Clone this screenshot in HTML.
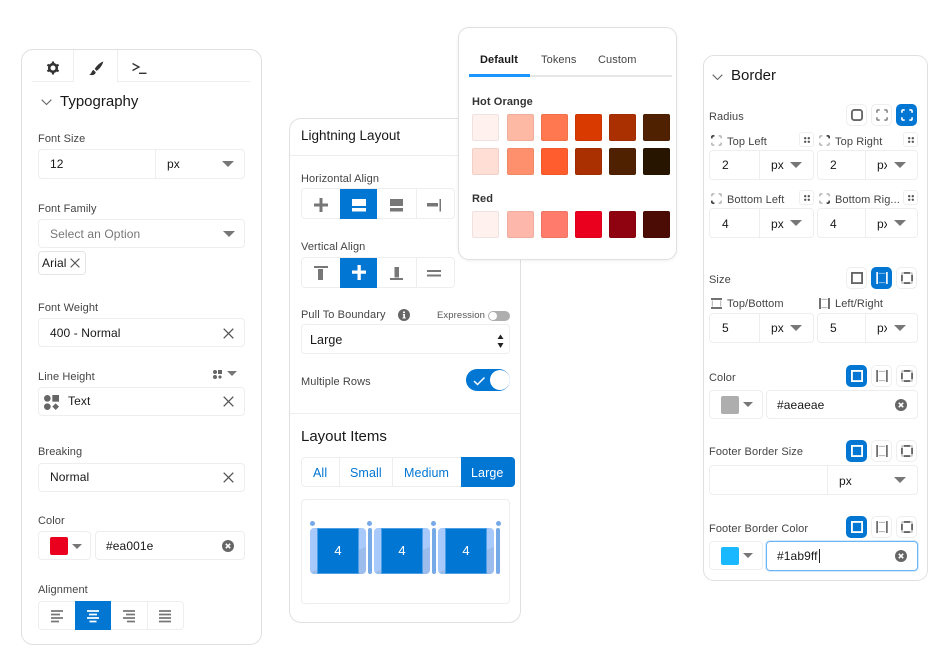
<!DOCTYPE html>
<html lang="en"><head><meta charset="utf-8"><title>Property panels</title>
<style>
html,body{margin:0;padding:0;background:#fff}
body{position:relative;width:945px;height:650px;overflow:hidden;font-family:"Liberation Sans",sans-serif;color:#181818}
.a{position:absolute;box-sizing:border-box}
.p{position:absolute;box-sizing:border-box;background:#fff;border:1px solid #e0e0e0}
.t{position:absolute;white-space:nowrap;line-height:16px;height:16px;margin-top:1px;font-size:11px;color:#444;letter-spacing:.1px}
.v{position:absolute;white-space:nowrap;line-height:16px;height:16px;font-size:12px;color:#181818;letter-spacing:.1px}
.h{position:absolute;white-space:nowrap;line-height:20px;height:20px;margin-top:1px;font-size:15px;color:#181818}
.f{position:absolute;box-sizing:border-box;background:#fff;border:1px solid #eee;border-radius:4px}
.l{position:absolute;background:#eee}
.tri{position:absolute;width:0;height:0;border-left:6px solid transparent;border-right:6px solid transparent;border-top:6px solid #777}
.tri.s{border-left-width:5px;border-right-width:5px;border-top-width:5.500px}
.active{position:absolute;background:#0176d3}
.sw{position:absolute;width:27px;height:27px;border-radius:2px;box-shadow:inset 0 0 0 1px rgba(0,0,0,.06)}
.b{position:absolute;box-sizing:border-box;width:21px;height:22px;border:1px solid #eee;border-radius:5px;background:#fff;color:#666}
.b.on{background:#0176d3;border-color:#0176d3;color:#fff}
.b svg{position:absolute;left:3.500px;top:4px;width:12px;height:12px}
.d{position:absolute;box-sizing:border-box;width:15px;height:15px;border:1px solid #eee;border-radius:3px;background:#fff}
svg{position:absolute;overflow:visible}
.dot{position:absolute;width:5px;height:5px;border-radius:50%;background:#76a9e8}
.it{position:absolute;top:528px;width:56px;height:46px;border-radius:4px;background:linear-gradient(155deg,#a8c9fb 62%,#9cbcec 62%)}
.it div{position:absolute;left:7px;top:0;width:42px;height:46px;background:#0176d3;border:1px solid #4f9fe6;box-sizing:border-box;color:#fff;font-size:13px;line-height:44px;text-align:center}
.bar{position:absolute;top:528px;width:4px;height:46px;border-radius:2px;background:#76a9e8}
</style></head><body>
<svg width="0" height="0" style="position:absolute">
<symbol id="x" viewBox="0 0 11 11"><path d="M.7.7l9.6 9.6M10.300.7L.7 10.300" stroke="#555" stroke-width="1.300" fill="none"/></symbol>
<symbol id="clr" viewBox="0 0 12 12"><circle cx="6" cy="6" r="6" fill="#666"/><path d="M3.800 3.800l4.400 4.400M8.200 3.800L3.800 8.200" stroke="#fff" stroke-width="1.600"/></symbol>
<symbol id="grid" viewBox="0 0 9 9"><circle cx="2" cy="2" r="2" fill="#666"/><rect x="5" y="0" width="4" height="4" fill="#666"/><circle cx="2" cy="7" r="2" fill="#666"/><path d="M7 5l2 2-2 2-2-2z" fill="#666"/></symbol>
<symbol id="drag" viewBox="0 0 7 7"><g fill="#555"><circle cx="1.400" cy="1.400" r="1.400"/><circle cx="5.600" cy="1.400" r="1.400"/><circle cx="1.400" cy="5.600" r="1.400"/><circle cx="5.600" cy="5.600" r="1.400"/></g></symbol>
<symbol id="rnd" viewBox="0 0 13 13"><rect x="1" y="1" width="11" height="11" rx="2.500" fill="none" stroke="currentColor" stroke-width="2"/></symbol>
<symbol id="cor" viewBox="0 0 13 13"><path d="M1 4V2.500Q1 1 2.500 1H4M9 1h1.500Q12 1 12 2.500V4M12 9v1.500Q12 12 10.500 12H9M4 12H2.500Q1 12 1 10.500V9" fill="none" stroke="currentColor" stroke-width="1.800"/></symbol>
<symbol id="sq" viewBox="0 0 13 13"><rect x="1" y="1" width="11" height="11" fill="none" stroke="currentColor" stroke-width="2"/></symbol>
<symbol id="lr" viewBox="0 0 13 13"><path d="M3 1.500h7M3 11.500h7" stroke="currentColor" stroke-opacity=".5" stroke-width="1"/><path d="M1.200 0v13M11.800 0v13" stroke="currentColor" stroke-width="1.800"/></symbol>
<symbol id="tb" viewBox="0 0 13 13"><path d="M1.500 3v7M11.500 3v7" stroke="currentColor" stroke-opacity=".5" stroke-width="1"/><path d="M0 1.200h13M0 11.800h13" stroke="currentColor" stroke-width="1.800"/></symbol>
<symbol id="mid" viewBox="0 0 13 13"><rect x="1" y="1" width="11" height="11" rx=".5" fill="none" stroke="currentColor" stroke-opacity=".45" stroke-width="1.500"/><path d="M3.200 1h6.600M3.200 12h6.600M1 3.200v6.600M12 3.200v6.600" stroke="currentColor" stroke-width="2"/></symbol>
</svg>

<!-- PANEL 1 -->
<div class="p" style="left:21px;top:49px;width:241px;height:596px;border-radius:12px"></div>
<div class="l" style="left:32px;top:81px;width:218px;height:1px"></div>
<div class="l" style="left:73px;top:50px;width:1px;height:32px"></div>
<div class="l" style="left:117px;top:50px;width:1px;height:32px"></div>
<div class="a" style="left:74px;top:50px;width:43px;height:33px;background:#fff"></div>
<svg style="left:46px;top:61px" width="14" height="14" viewBox="0 0 14 14"><g stroke="#333" stroke-width="2.200"><path d="M7 .5v13M1.400 3.700l11.200 6.600M12.600 3.700L1.400 10.300"/></g><circle cx="7" cy="7" r="3.800" fill="#fff" stroke="#333" stroke-width="2.600"/></svg>
<svg style="left:89px;top:61px" width="15" height="15" viewBox="0 0 15 15"><path d="M14.300.5C11 1.500 7.500 4.700 5.700 8l1.900 1.900C10.500 8 13.500 4.300 14.300.5zM4.500 9C2.500 9.300 3 12.500.3 13.700c2.700 1 6.200.2 6.400-2.600z" fill="#333"/></svg>
<svg style="left:132px;top:62px" width="15" height="13" viewBox="0 0 15 13"><path d="M.5 1.500L7 5 .5 8.500" fill="none" stroke="#333" stroke-width="1.300"/><path d="M7 11.300h7.500" stroke="#333" stroke-width="1.400"/></svg>
<svg style="left:41px;top:99px" width="11" height="7" viewBox="0 0 11 7"><path d="M.7.700l4.800 4.800L10.300.700" fill="none" stroke="#666" stroke-width="1.100"/></svg>
<div class="h" style="left:60px;top:91px">Typography</div>

<div class="t" style="left:38px;top:130px">Font Size</div>
<div class="f" style="left:38px;top:149px;width:207px;height:30px"></div>
<div class="l" style="left:155px;top:150px;width:1px;height:28px"></div>
<div class="v" style="left:50px;top:156px">12</div><div class="v" style="left:167px;top:156px">px</div>
<div class="tri" style="left:222px;top:161px"></div>

<div class="t" style="left:38px;top:200px">Font Family</div>
<div class="f" style="left:38px;top:219px;width:207px;height:29px"></div>
<div class="v" style="left:50px;top:226px;color:#777">Select an Option</div>
<div class="tri" style="left:223px;top:231px"></div>
<div class="f" style="left:38px;top:251px;width:48px;height:24px;border-color:#e4e4e4"></div>
<div class="v" style="left:42px;top:255px">Arial</div>
<svg style="left:70px;top:258px" width="10" height="10"><use href="#x"/></svg>

<div class="t" style="left:38px;top:299px">Font Weight</div>
<div class="f" style="left:38px;top:318px;width:207px;height:29px"></div>
<div class="v" style="left:50px;top:325px">400 - Normal</div>
<svg style="left:223px;top:328px" width="11" height="11"><use href="#x"/></svg>

<div class="t" style="left:38px;top:368px">Line Height</div>
<svg style="left:213px;top:370px" width="9" height="9"><use href="#grid"/></svg>
<div class="tri s" style="left:227px;top:371px"></div>
<div class="f" style="left:38px;top:387px;width:207px;height:29px"></div>
<svg style="left:44px;top:395px" width="15" height="15"><use href="#grid"/></svg>
<div class="v" style="left:68px;top:393px">Text</div>
<svg style="left:223px;top:396px" width="11" height="11"><use href="#x"/></svg>

<div class="t" style="left:38px;top:443px">Breaking</div>
<div class="f" style="left:38px;top:463px;width:207px;height:29px"></div>
<div class="v" style="left:50px;top:469px">Normal</div>
<svg style="left:223px;top:472px" width="11" height="11"><use href="#x"/></svg>

<div class="t" style="left:38px;top:512px">Color</div>
<div class="f" style="left:38px;top:531px;width:53px;height:29px"></div>
<div class="a" style="left:50px;top:537px;width:18px;height:18px;background:#ea001e;border-radius:2px"></div>
<div class="tri s" style="left:72px;top:544px"></div>
<div class="f" style="left:95px;top:531px;width:150px;height:29px"></div>
<div class="v" style="left:106px;top:538px">#ea001e</div>
<svg style="left:222px;top:540px" width="12" height="12"><use href="#clr"/></svg>

<div class="t" style="left:38px;top:581px">Alignment</div>
<div class="f" style="left:38px;top:601px;width:146px;height:29px"></div>
<div class="l" style="left:147px;top:602px;width:1px;height:27px"></div>
<div class="active" style="left:75px;top:601px;width:36px;height:29px"></div>
<svg style="left:51px;top:610px" width="13" height="13"><path d="M0 1h12M0 4.500h9M0 8h12M0 11.500h8" stroke="#777" stroke-width="1.700"/></svg>
<svg style="left:87px;top:610px" width="13" height="13"><path d="M0 1h12M2 4.500h8M0 8h12M2.500 11.500h7" stroke="#fff" stroke-width="1.700"/></svg>
<svg style="left:123px;top:610px" width="13" height="13"><path d="M0 1h12M3 4.500h9M0 8h12M4 11.500h8" stroke="#777" stroke-width="1.700"/></svg>
<svg style="left:159px;top:610px" width="13" height="13"><path d="M0 1h12M0 4.500h12M0 8h12M0 11.500h12" stroke="#777" stroke-width="1.700"/></svg>

<!-- PANEL 2 -->
<div class="p" style="left:289px;top:118px;width:232px;height:505px;border-radius:12px"></div>
<div class="v" style="left:301px;top:128px;font-size:13.500px;letter-spacing:0">Lightning Layout</div>
<div class="l" style="left:290px;top:155px;width:230px;height:1px"></div>

<div class="t" style="left:301px;top:170px">Horizontal Align</div>
<div class="f" style="left:301px;top:188px;width:154px;height:31px"></div>
<div class="l" style="left:416px;top:189px;width:1px;height:29px"></div>
<div class="active" style="left:340px;top:189px;width:37px;height:30px"></div>
<svg style="left:314px;top:198px" width="14" height="14"><path d="M0 5.500h14v3H0zM5.500 0h3v14h-3z" fill="#777"/></svg>
<svg style="left:352px;top:199px" width="14" height="13"><path d="M0 0h14v7H0zM0 9h14v3.500H0z" fill="#fff"/></svg>
<svg style="left:390px;top:199px" width="14" height="13"><path d="M0 0h13v7H0zM0 9h13v3.500H0z" fill="#777"/></svg>
<svg style="left:427px;top:199px" width="15" height="13"><path d="M0 4h11v3.500H0zM12.500 0H14v12.500h-1.500z" fill="#777"/></svg>

<div class="t" style="left:301px;top:238px">Vertical Align</div>
<div class="f" style="left:301px;top:257px;width:154px;height:31px"></div>
<div class="l" style="left:416px;top:258px;width:1px;height:29px"></div>
<div class="active" style="left:340px;top:258px;width:37px;height:30px"></div>
<svg style="left:314px;top:266px" width="14" height="15"><path d="M0 0h14v2H0zM4 3h5v11H4z" fill="#777"/></svg>
<svg style="left:352px;top:265px" width="14" height="15"><path d="M0 5.500h14v3.300H0zM5.500 0h3.300v15H5.500z" fill="#fff"/></svg>
<svg style="left:390px;top:267px" width="14" height="14"><path d="M4.500 0h4.500v10.500H4.500zM0 11h13v2H0z" fill="#777"/></svg>
<svg style="left:427px;top:270px" width="14" height="7"><path d="M0 0h14v2H0zM0 4.500h14v2H0z" fill="#777"/></svg>

<div class="t" style="left:301px;top:306px">Pull To Boundary</div>
<svg style="left:398px;top:309px" width="12" height="12" viewBox="0 0 12 12"><circle cx="6" cy="6" r="6" fill="#666"/><path d="M5 2.500h2v1.600H5zM4.800 5h2.200v3.500h.8v1H4.500v-1h.8V6h-.5z" fill="#fff"/></svg>
<div class="t" style="left:437px;top:307px;font-size:9.500px;color:#555">Expression</div>
<div class="a" style="left:488px;top:311px;width:22px;height:10px;border-radius:5px;background:#aeaeae"></div>
<div class="a" style="left:489px;top:312px;width:8px;height:8px;border-radius:50%;background:#fff"></div>
<div class="f" style="left:301px;top:324px;width:209px;height:30px"></div>
<div class="v" style="left:310px;top:332px;font-size:12.500px">Large</div>
<svg style="left:496px;top:333px" width="8" height="16" viewBox="0 0 8 16"><path d="M1.500 6L4.500 1.500 7.500 6zM1.500 10L4.500 15 7.500 10z" fill="#222"/></svg>

<div class="t" style="left:301px;top:373px">Multiple Rows</div>
<div class="a" style="left:466px;top:369px;width:44px;height:22px;border-radius:11px;background:#0176d3"></div>
<div class="a" style="left:490px;top:370px;width:20px;height:20px;border-radius:50%;background:#fff"></div>
<svg style="left:473px;top:376px" width="13" height="10"><path d="M1 5l3.500 3.500L11.500 1.500" fill="none" stroke="#fff" stroke-width="1.500"/></svg>
<div class="l" style="left:290px;top:413px;width:230px;height:1px"></div>
<div class="h" style="left:301px;top:426px">Layout Items</div>
<div class="f" style="left:301px;top:457px;width:214px;height:30px"></div>
<div class="l" style="left:339px;top:458px;width:1px;height:28px"></div>
<div class="l" style="left:392px;top:458px;width:1px;height:28px"></div>
<div class="active" style="left:461px;top:457px;width:54px;height:30px;border-radius:0 4px 4px 0"></div>
<div class="v" style="left:313px;top:465px;color:#0176d3;font-size:12.500px">All</div>
<div class="v" style="left:350px;top:465px;color:#0176d3;font-size:12.500px">Small</div>
<div class="v" style="left:404px;top:465px;color:#0176d3;font-size:12.500px">Medium</div>
<div class="v" style="left:471px;top:465px;color:#fff;font-size:12.500px">Large</div>
<div class="f" style="left:301px;top:499px;width:209px;height:105px"></div>
<div class="dot" style="left:310px;top:521px"></div><div class="dot" style="left:367px;top:521px"></div><div class="dot" style="left:431px;top:521px"></div><div class="dot" style="left:496px;top:521px"></div>
<div class="it" style="left:310px"><div>4</div></div><div class="bar" style="left:368px"></div>
<div class="it" style="left:374px"><div>4</div></div><div class="bar" style="left:432px"></div>
<div class="it" style="left:438px"><div>4</div></div><div class="bar" style="left:496px"></div>

<!-- PANEL 3 -->
<div class="p" style="left:458px;top:27px;width:219px;height:233px;border-radius:11px;box-shadow:0 1px 3px rgba(0,0,0,.06)"></div>
<div class="v" style="left:480px;top:52px;font-size:11px;font-weight:bold">Default</div>
<div class="t" style="left:541px;top:51px">Tokens</div>
<div class="t" style="left:598px;top:51px">Custom</div>
<div class="a" style="left:469px;top:75px;width:203px;height:2px;background:#e6e6e6"></div>
<div class="a" style="left:469px;top:74px;width:61px;height:3px;background:#1b96ff"></div>
<div class="t" style="left:472px;top:93px;font-weight:bold;color:#333">Hot Orange</div>
<div class="sw" style="left:472px;top:114px;background:#fef1ee"></div><div class="sw" style="left:507px;top:114px;background:#feb9a5"></div><div class="sw" style="left:541px;top:114px;background:#ff784f"></div><div class="sw" style="left:575px;top:114px;background:#d83a00"></div><div class="sw" style="left:609px;top:114px;background:#aa3001"></div><div class="sw" style="left:643px;top:114px;background:#4f2100"></div>
<div class="sw" style="left:472px;top:148px;background:#ffded5"></div><div class="sw" style="left:507px;top:148px;background:#ff906e"></div><div class="sw" style="left:541px;top:148px;background:#ff5d2d"></div><div class="sw" style="left:575px;top:148px;background:#aa3001"></div><div class="sw" style="left:609px;top:148px;background:#4f2100"></div><div class="sw" style="left:643px;top:148px;background:#281500"></div>
<div class="t" style="left:472px;top:190px;font-weight:bold;color:#333">Red</div>
<div class="sw" style="left:472px;top:211px;background:#fef1ee"></div><div class="sw" style="left:507px;top:211px;background:#feb8ab"></div><div class="sw" style="left:541px;top:211px;background:#ff7b6b"></div><div class="sw" style="left:575px;top:211px;background:#ea001e"></div><div class="sw" style="left:609px;top:211px;background:#8e030f"></div><div class="sw" style="left:643px;top:211px;background:#4a0c04"></div>

<!-- PANEL 4 -->
<div class="p" style="left:703px;top:55px;width:225px;height:526px;border-radius:11px"></div>
<svg style="left:712px;top:74px" width="11" height="7" viewBox="0 0 11 7"><path d="M.7.700l4.800 4.800L10.300.700" fill="none" stroke="#666" stroke-width="1.100"/></svg>
<div class="h" style="left:731px;top:65px">Border</div>

<div class="t" style="left:709px;top:108px">Radius</div>
<div class="b" style="left:846px;top:104px"><svg><use href="#rnd"/></svg></div>
<div class="b" style="left:871px;top:104px"><svg style="color:#888"><use href="#cor"/></svg></div>
<div class="b on" style="left:896px;top:104px"><svg><use href="#cor"/></svg></div>

<svg style="left:711px;top:135px;color:#b5b5b5" width="11" height="11" viewBox="0 0 13 13"><use href="#cor"/><path d="M1 4V2.500Q1 1 2.500 1H4" fill="none" stroke="#333" stroke-width="1.800"/></svg><div class="t" style="left:727px;top:133px">Top Left</div>
<div class="d" style="left:799px;top:132px"></div><svg style="left:804px;top:137px" width="6" height="6"><use href="#drag"/></svg>
<svg style="left:819px;top:135px;color:#b5b5b5" width="11" height="11" viewBox="0 0 13 13"><use href="#cor"/><path d="M9 1h1.500Q12 1 12 2.500V4" fill="none" stroke="#333" stroke-width="1.800"/></svg><div class="t" style="left:835px;top:133px">Top Right</div>
<div class="d" style="left:903px;top:132px"></div><svg style="left:908px;top:137px" width="6" height="6"><use href="#drag"/></svg>
<div class="f" style="left:709px;top:150px;width:105px;height:30px"></div><div class="l" style="left:759px;top:151px;width:1px;height:28px"></div>
<div class="v" style="left:722px;top:157px">2</div><div class="v" style="left:771px;top:157px">px</div><div class="tri" style="left:790px;top:162px"></div>
<div class="f" style="left:817px;top:150px;width:101px;height:30px"></div><div class="l" style="left:865px;top:151px;width:1px;height:28px"></div>
<div class="v" style="left:830px;top:157px">2</div><div class="v" style="left:877px;top:157px;width:10px;overflow:hidden">px</div><div class="tri" style="left:894px;top:162px"></div>

<svg style="left:711px;top:193px;color:#b5b5b5" width="11" height="11" viewBox="0 0 13 13"><use href="#cor"/><path d="M4 12H2.500Q1 12 1 10.500V9" fill="none" stroke="#333" stroke-width="1.800"/></svg><div class="t" style="left:727px;top:191px">Bottom Left</div>
<div class="d" style="left:799px;top:190px"></div><svg style="left:804px;top:195px" width="6" height="6"><use href="#drag"/></svg>
<svg style="left:819px;top:193px;color:#b5b5b5" width="11" height="11" viewBox="0 0 13 13"><use href="#cor"/><path d="M12 9v1.500Q12 12 10.500 12H9" fill="none" stroke="#333" stroke-width="1.800"/></svg><div class="t" style="left:835px;top:191px">Bottom Rig...</div>
<div class="d" style="left:903px;top:190px"></div><svg style="left:908px;top:195px" width="6" height="6"><use href="#drag"/></svg>
<div class="f" style="left:709px;top:208px;width:105px;height:30px"></div><div class="l" style="left:759px;top:209px;width:1px;height:28px"></div>
<div class="v" style="left:722px;top:216px">4</div><div class="v" style="left:771px;top:216px">px</div><div class="tri" style="left:790px;top:220px"></div>
<div class="f" style="left:817px;top:208px;width:101px;height:30px"></div><div class="l" style="left:865px;top:209px;width:1px;height:28px"></div>
<div class="v" style="left:830px;top:216px">4</div><div class="v" style="left:877px;top:216px;width:10px;overflow:hidden">px</div><div class="tri" style="left:894px;top:220px"></div>

<div class="t" style="left:709px;top:271px">Size</div>
<div class="b" style="left:846px;top:267px"><svg><use href="#sq"/></svg></div>
<div class="b on" style="left:871px;top:267px"><svg><use href="#lr"/></svg></div>
<div class="b" style="left:896px;top:267px"><svg><use href="#mid"/></svg></div>
<svg style="left:711px;top:298px;color:#444" width="11" height="11" viewBox="0 0 13 13"><use href="#tb"/></svg><div class="t" style="left:727px;top:295px">Top/Bottom</div>
<svg style="left:819px;top:298px;color:#444" width="11" height="11" viewBox="0 0 13 13"><use href="#lr"/></svg><div class="t" style="left:835px;top:295px">Left/Right</div>
<div class="f" style="left:709px;top:313px;width:105px;height:30px"></div><div class="l" style="left:759px;top:314px;width:1px;height:28px"></div>
<div class="v" style="left:722px;top:320px">5</div><div class="v" style="left:771px;top:320px">px</div><div class="tri" style="left:790px;top:325px"></div>
<div class="f" style="left:817px;top:313px;width:101px;height:30px"></div><div class="l" style="left:865px;top:314px;width:1px;height:28px"></div>
<div class="v" style="left:830px;top:320px">5</div><div class="v" style="left:877px;top:320px;width:10px;overflow:hidden">px</div><div class="tri" style="left:894px;top:325px"></div>

<div class="t" style="left:709px;top:369px">Color</div>
<div class="b on" style="left:846px;top:365px"><svg><use href="#sq"/></svg></div>
<div class="b" style="left:871px;top:365px"><svg><use href="#lr"/></svg></div>
<div class="b" style="left:896px;top:365px"><svg><use href="#mid"/></svg></div>
<div class="f" style="left:709px;top:390px;width:54px;height:29px"></div>
<div class="a" style="left:721px;top:396px;width:18px;height:18px;background:#aeaeae;border-radius:2px"></div>
<div class="tri s" style="left:743px;top:402px"></div>
<div class="f" style="left:766px;top:390px;width:152px;height:29px"></div>
<div class="v" style="left:777px;top:397px">#aeaeae</div>
<svg style="left:895px;top:399px" width="12" height="12"><use href="#clr"/></svg>

<div class="t" style="left:709px;top:443px">Footer Border Size</div>
<div class="b on" style="left:846px;top:440px"><svg><use href="#sq"/></svg></div>
<div class="b" style="left:871px;top:440px"><svg><use href="#lr"/></svg></div>
<div class="b" style="left:896px;top:440px"><svg><use href="#mid"/></svg></div>
<div class="f" style="left:709px;top:465px;width:209px;height:30px"></div><div class="l" style="left:827px;top:466px;width:1px;height:28px"></div>
<div class="v" style="left:839px;top:473px">px</div><div class="tri" style="left:894px;top:477px"></div>

<div class="t" style="left:709px;top:520px">Footer Border Color</div>
<div class="b on" style="left:846px;top:516px"><svg><use href="#sq"/></svg></div>
<div class="b" style="left:871px;top:516px"><svg><use href="#lr"/></svg></div>
<div class="b" style="left:896px;top:516px"><svg><use href="#mid"/></svg></div>
<div class="f" style="left:709px;top:541px;width:54px;height:29px"></div>
<div class="a" style="left:721px;top:547px;width:18px;height:18px;background:#1ab9ff;border-radius:2px"></div>
<div class="tri s" style="left:743px;top:553px"></div>
<div class="f" style="left:766px;top:541px;width:152px;height:30px;border-color:#6cb6f5;box-shadow:0 0 0 1px #d5e9fb"></div>
<div class="v" style="left:777px;top:548px">#1ab9ff</div>
<div class="a" style="left:819px;top:549px;width:1px;height:14px;background:#222"></div>
<svg style="left:895px;top:550px" width="12" height="12"><use href="#clr"/></svg>
</body></html>
